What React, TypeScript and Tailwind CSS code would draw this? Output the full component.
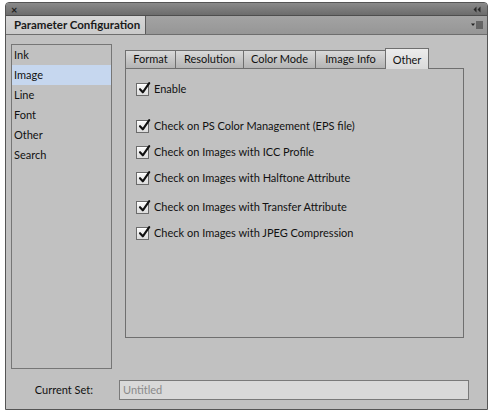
import React from "react";

const items = ["Ink", "Image", "Line", "Font", "Other", "Search"];
const tabs = ["Format", "Resolution", "Color Mode", "Image Info", "Other"];
const tabWidths = ["w-[50px]", "w-[68px]", "w-[72px]", "w-[70px]", "w-[44px]"];

const checks: { label: string; gap: string }[] = [
  { label: "Enable", gap: "mt-[13px]" },
  { label: "Check on PS Color Management (EPS file)", gap: "mt-[23px]" },
  { label: "Check on Images with ICC Profile", gap: "mt-[12px]" },
  { label: "Check on Images with Halftone Attribute", gap: "mt-[12px]" },
  { label: "Check on Images with Transfer Attribute", gap: "mt-[15px]" },
  { label: "Check on Images with JPEG Compression", gap: "mt-[12px]" },
];

function CheckBox() {
  return (
    <span className="relative block w-[13px] h-[13px] shrink-0 border border-[#6b6b6b] bg-gradient-to-b from-[#fbfbfb] to-[#dcdcdc] shadow-[inset_0_1px_0_#fff]">
      <svg
        className="absolute left-[1px] top-[-2px]"
        width="13"
        height="13"
        viewBox="0 0 13 13"
      >
        <path
          d="M2 7.2 L4.8 10.3 L11.2 1.2"
          fill="none"
          stroke="#111"
          strokeWidth="2.1"
          strokeLinecap="round"
          strokeLinejoin="round"
        />
      </svg>
    </span>
  );
}

export default function App() {
  return (
    <div
      className="w-[492px] h-[417px] bg-white pt-[2px] pl-[5px] text-[#111]"
      style={{ fontFamily: 'Lato, "Liberation Sans", Arial, sans-serif' }}
    >
      <div className="w-[483px] h-[408px] rounded-t-[4px] border border-[#555] bg-[#c1c1c1] flex flex-col overflow-hidden">
        {/* title bar */}
        <div className="h-[12px] bg-gradient-to-b from-[#8a8a8a] to-[#6c6c6c] flex items-center justify-between px-[5px]">
          <span className="text-[11px] leading-none text-[#1c1c1c] font-bold">×</span>
          <svg width="8" height="7" viewBox="0 0 8 7" className="mr-[1px]">
            <path d="M3.5 0.5 L0.5 3.5 L3.5 6.5 Z M7.5 0.5 L4.5 3.5 L7.5 6.5 Z" fill="#2a2a2a" />
          </svg>
        </div>

        {/* panel tab strip */}
        <div className="h-[19px] bg-gradient-to-b from-[#a3a3a3] to-[#969696] border-t border-[#4e4e4e] flex items-stretch justify-between">
          <div className="w-[140px] bg-gradient-to-b from-[#d6d6d6] to-[#cacaca] border-r border-[#5a5a5a] flex items-center pl-[8px] text-[11.5px] font-bold text-[#1a1a1a] whitespace-nowrap">
            Parameter Configuration
          </div>
          <div className="flex items-center pr-[4px]">
            <svg width="12" height="8" viewBox="0 0 12 8">
              <path d="M0 2.5 L4 2.5 L2 5 Z" fill="#222" />
              <rect x="5" y="0.5" width="7" height="1" fill="#2e2e2e" />
              <rect x="5" y="2.5" width="7" height="1" fill="#2e2e2e" />
              <rect x="5" y="4.5" width="7" height="1" fill="#2e2e2e" />
              <rect x="5" y="6.5" width="7" height="1" fill="#2e2e2e" />
            </svg>
          </div>
        </div>

        {/* body */}
        <div className="flex-1 border-t border-[#6e6e6e] flex flex-col px-[5px] text-[11px]">
          <div className="flex mt-[9px]">
            <div className="w-[101px] h-[325px] border border-[#767676] bg-[#c1c1c1]">
              {items.map((it) => (
                <div
                  key={it}
                  className={
                    "h-[20px] flex items-center pl-[2px] " +
                    (it === "Image" ? "bg-[#c6d7ef]" : "")
                  }
                >
                  {it}
                </div>
              ))}
            </div>

            <div className="ml-[13px] mt-[4px] flex flex-col">
              <div className="flex items-end h-[20px]">
                {tabs.map((t, i) => {
                  const active = t === "Other";
                  return (
                    <div
                      key={t}
                      className={
                        tabWidths[i] +
                        " flex items-center justify-center border-l border-t border-[#6f6f6f] " +
                        (i === tabs.length - 1 ? "border-r " : "") +
                        (active
                          ? "h-[21px] mb-[-1px] bg-gradient-to-b from-[#ececec] to-[#dadada] pt-[2px] relative z-10"
                          : "h-[18px] bg-gradient-to-b from-[#d9d9d9] to-[#b4b4b4]")
                      }
                    >
                      {t}
                    </div>
                  );
                })}
              </div>
              <div className="w-[339px] h-[270px] border border-[#6f6f6f] bg-[#c1c1c1] pl-[10px] flex flex-col">
                {checks.map((c) => (
                  <div key={c.label} className={c.gap + " flex items-center gap-[5px] h-[14px]"}>
                    <CheckBox />
                    <span>{c.label}</span>
                  </div>
                ))}
              </div>
            </div>
          </div>

          <div className="flex items-center mt-[11px]">
            <div className="w-[108px] text-right pr-[26px]">Current Set:</div>
            <div className="w-[350px] h-[20px] border border-[#7a7a7a] bg-[#d9d9d9] flex items-center pl-[3px] text-[#8a8a8a]">
              Untitled
            </div>
          </div>
        </div>
      </div>
    </div>
  );
}
